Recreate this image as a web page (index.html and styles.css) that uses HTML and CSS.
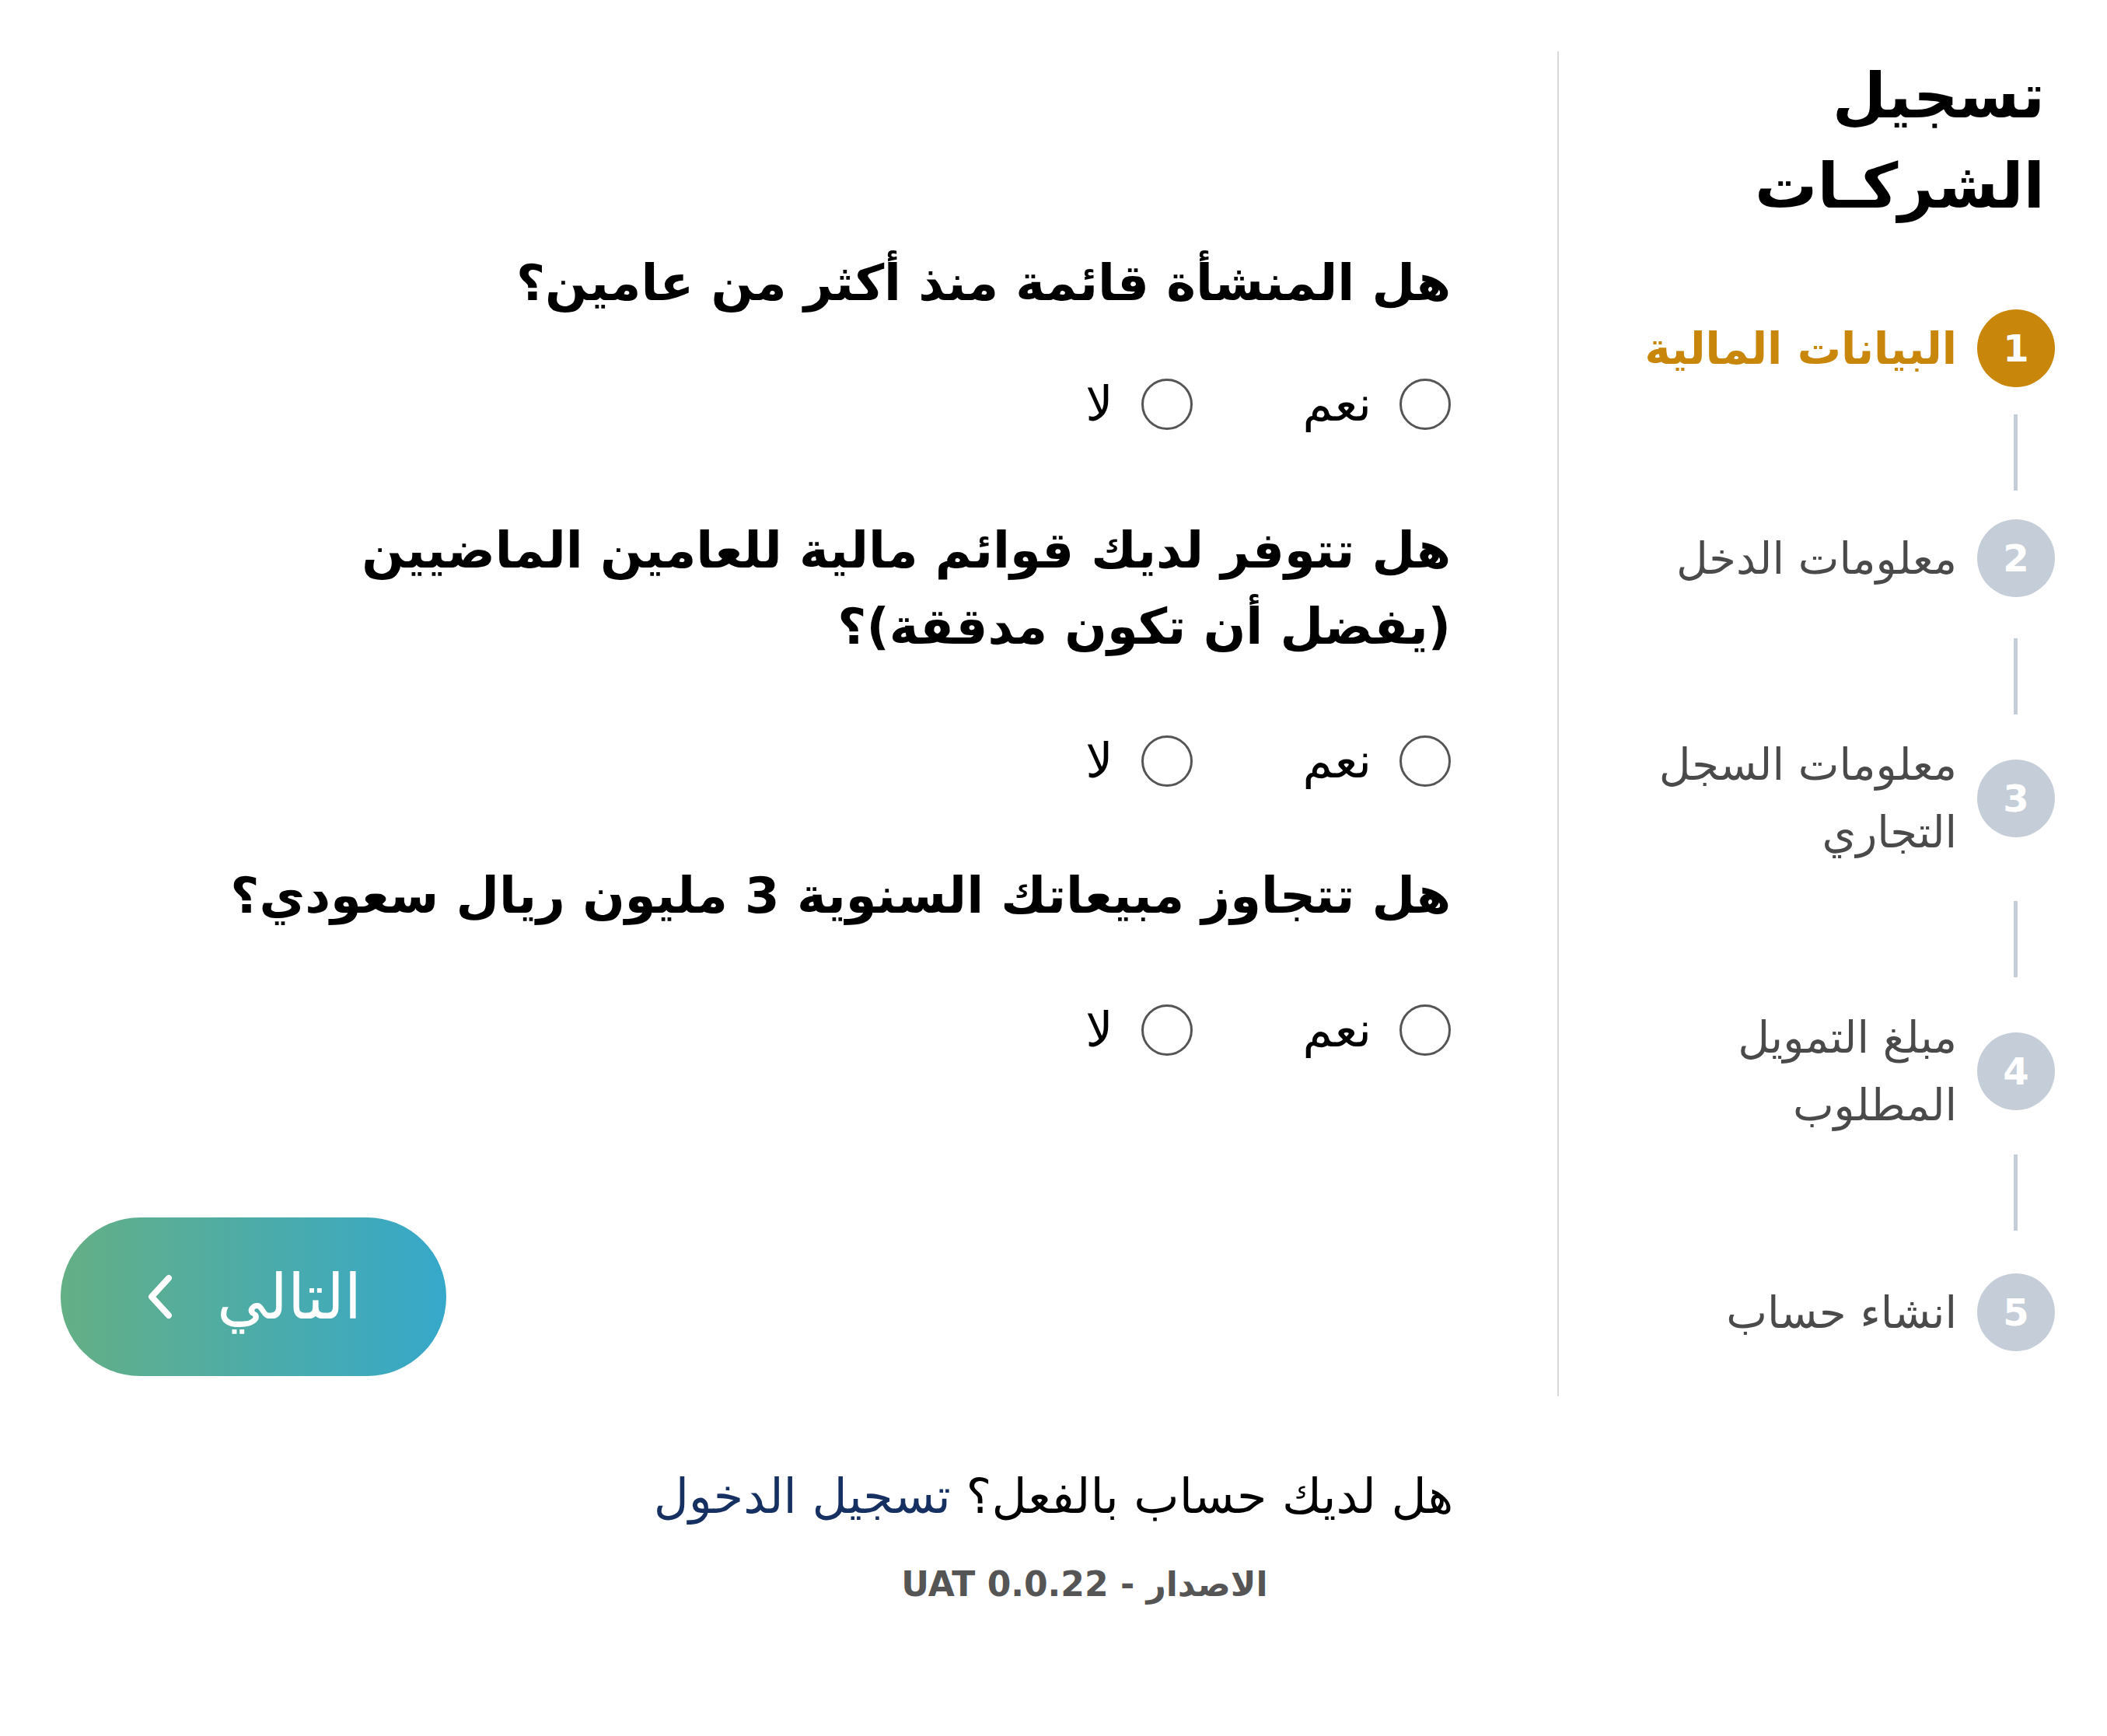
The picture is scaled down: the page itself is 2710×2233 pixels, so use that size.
FILE: index.html
```html
<!DOCTYPE html>
<html lang="ar" dir="rtl">
<head>
<meta charset="utf-8">
<title>تسجيل الشركات</title>
<link rel="stylesheet" href="styles.css">
</head>
<body>
<div class="page">
  <aside class="sidebar">
    <h1 class="title">تسجيل<br>الشركـات</h1>
    <div class="steps">
      <div class="step active"><span class="num">1</span><span class="label">البيانات المالية</span></div>
      <div class="connector c1"></div>
      <div class="step"><span class="num">2</span><span class="label">معلومات الدخل</span></div>
      <div class="connector c2"></div>
      <div class="step"><span class="num">3</span><span class="label">معلومات السجل<br>التجاري</span></div>
      <div class="connector c3"></div>
      <div class="step"><span class="num">4</span><span class="label">مبلغ التمويل<br>المطلوب</span></div>
      <div class="connector c4"></div>
      <div class="step"><span class="num">5</span><span class="label">انشاء حساب</span></div>
    </div>
  </aside>
  <main class="main">
    <div class="qblock">
      <p class="question">هل المنشأة قائمة منذ أكثر من عامين؟</p>
      <div class="options">
        <label class="option"><span class="radio"></span><span class="opt-text">نعم</span></label>
        <label class="option"><span class="radio"></span><span class="opt-text">لا</span></label>
      </div>
    </div>
    <div class="qblock">
      <p class="question">هل تتوفر لديك قوائم مالية للعامين الماضيين<br>(يفضل أن تكون مدققة)؟</p>
      <div class="options">
        <label class="option"><span class="radio"></span><span class="opt-text">نعم</span></label>
        <label class="option"><span class="radio"></span><span class="opt-text">لا</span></label>
      </div>
    </div>
    <div class="qblock">
      <p class="question">هل تتجاوز مبيعاتك السنوية 3 مليون ريال سعودي؟</p>
      <div class="options">
        <label class="option"><span class="radio"></span><span class="opt-text">نعم</span></label>
        <label class="option"><span class="radio"></span><span class="opt-text">لا</span></label>
      </div>
    </div>
    <div class="actions">
      <button class="next-btn" type="button">
        <span class="btn-text">التالي</span>
        <svg class="chev" width="40" height="60" viewBox="0 0 40 60"><path d="M30 6 L8 30 L30 54" fill="none" stroke="#fff" stroke-width="8" stroke-linecap="round" stroke-linejoin="round"/></svg>
      </button>
    </div>
  </main>
</div>
<footer class="footer">
  <p class="have-account">هل لديك حساب بالفعل؟ <a class="login" href="#">تسجيل الدخول</a></p>
  <p class="version">الاصدار - UAT 0.0.22</p>
</footer>
</body>
</html>
```

FILE: styles.css
```css
html, body {
  margin: 0;
  background: #ffffff;
}
body {
  font-family: "DejaVu Sans", sans-serif;
  direction: rtl;
  color: #000;
}
.page {
  display: flex;
  padding-top: 66px;
}
.sidebar {
  width: 707px;
  flex-shrink: 0;
  box-sizing: border-box;
  border-left: 2px solid #d9d9d9;
  padding: 0 67px 56px 0;
}
.title {
  margin: 0 13px 100px 0;
  font-size: 80px;
  line-height: 116px;
  font-weight: bold;
  color: #000;
}
.steps {
  display: flex;
  flex-direction: column;
}
.step {
  display: flex;
  align-items: center;
  gap: 26px;
  min-height: 100px;
}
.num {
  width: 100px;
  height: 100px;
  flex-shrink: 0;
  border-radius: 50%;
  background: #c5ced8;
  color: #fff;
  font-weight: bold;
  font-size: 48px;
  display: flex;
  align-items: center;
  justify-content: center;
}
.label {
  font-size: 56px;
  line-height: 87px;
  color: #4a4a4a;
}
.step.active .num {
  background: #c8860a;
}
.step.active .label {
  color: #c8860a;
  font-weight: bold;
}
.connector {
  width: 5px;
  height: 98px;
  background: #c5ced8;
  margin-right: 48px;
}
.connector.c1 { margin-top: 35px; margin-bottom: 37px; }
.connector.c2 { margin-top: 53px; margin-bottom: 21px; }
.connector.c3 { margin-top: 45px; margin-bottom: 34px; }
.connector.c4 { margin-top: 20px; margin-bottom: 55px; }
.main {
  flex: 1;
  padding: 249px 137px 26px 78px;
  display: flex;
  flex-direction: column;
}
.qblock {
  margin-bottom: 91px;
}
.qblock:first-child {
  margin-bottom: 106px;
}
.qblock:first-child .options {
  margin-top: 74px;
}
.question {
  margin: 0;
  font-size: 64px;
  line-height: 98px;
  font-weight: bold;
}
.options {
  display: flex;
  align-items: center;
  gap: 142px;
  margin-top: 91px;
}
.option {
  display: flex;
  align-items: center;
  gap: 36px;
}
.radio {
  width: 66px;
  height: 66px;
  box-sizing: border-box;
  border: 3px solid #555;
  border-radius: 50%;
}
.opt-text {
  font-size: 62px;
  line-height: 66px;
}
.actions {
  display: flex;
  justify-content: flex-end;
  margin-top: 117px;
}
.next-btn {
  width: 496px;
  height: 204px;
  border: none;
  border-radius: 102px;
  background: linear-gradient(to right, #64af85, #36a8ca);
  display: flex;
  align-items: center;
  justify-content: center;
  gap: 52px;
  padding: 0;
  font-family: "DejaVu Sans", sans-serif;
  cursor: pointer;
}
.btn-text {
  color: #fff;
  font-size: 80px;
}
.chev {
  display: block;
}
.footer {
  text-align: center;
  margin-top: 89px;
}
.have-account {
  margin: 0;
  font-size: 62px;
  line-height: 80px;
}
.login {
  color: #163062;
  text-decoration: none;
}
.version {
  margin: 40px 0 0;
  padding-left: 80px;
  font-size: 44px;
  line-height: 66px;
  font-weight: bold;
  color: #555;
}
```
